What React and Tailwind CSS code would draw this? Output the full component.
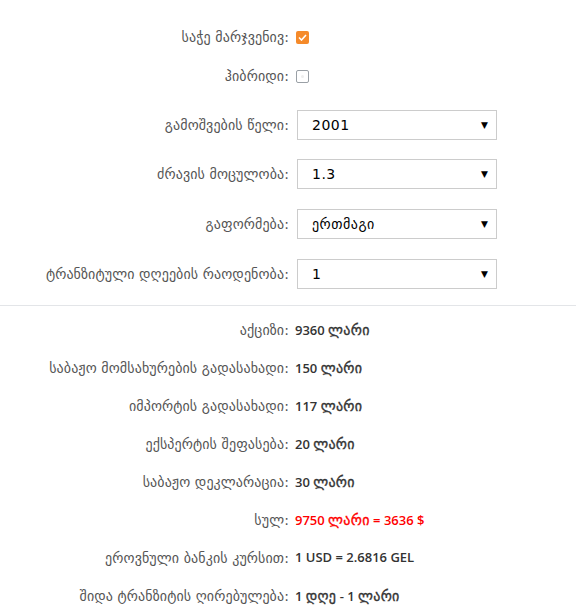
import React from 'react';

const font = { fontFamily: '"DejaVu Sans", sans-serif' };
const valueFont = { fontFamily: '"Open Sans", "DejaVu Sans", sans-serif' };

function Label({ children }) {
  return (
    <div className="w-[290px] shrink-0 text-right text-[14px] tracking-[0.1px] text-[#555] pr-[1px]">{children}</div>
  );
}

function Check({ checked }) {
  if (checked) {
    return (
      <div className="w-[13px] h-[13px] rounded-[2px] bg-[#f58a2a] flex items-center justify-center">
        <svg width="9" height="7" viewBox="0 0 9 7" fill="none">
          <path d="M1 3.5 L3.5 6 L8 1" stroke="#fff" strokeWidth="1.6" />
        </svg>
      </div>
    );
  }
  return (
    <div className="w-[13px] h-[13px] rounded-[2px] border border-[#9aa0a6] bg-white flex items-center justify-center">
      <div className="w-[3px] h-[3px] rounded-full bg-[#eee]" />
    </div>
  );
}

function Select({ value }) {
  return (
    <div className="w-[200px] h-[30px] border border-[#ccc] bg-white flex items-center justify-between pl-[14px] pr-[8px] text-[14px] text-black">
      <span className="tracking-[0.5px]">{value}</span>
      <span className="text-[9px] leading-none">▼</span>
    </div>
  );
}

// georgian runs in the values look lighter than the digits
function Value({ text, red }) {
  const parts = text.split(/([\u10A0-\u10FF]+)/);
  return (
    <span
      className={`text-[13px] font-semibold ${red ? 'text-[#ff0000]' : 'text-[#333]'}`}
      style={valueFont}
    >
      {parts.map((p, i) =>
        /[\u10A0-\u10FF]/.test(p) ? (
          <span key={i} className="font-normal text-[14px] tracking-[0.3px]" style={{ ...font, WebkitTextStroke: '0.35px currentColor' }}>
            {p}
          </span>
        ) : (
          <span key={i}>{p}</span>
        )
      )}
    </span>
  );
}

const results = [
  ['აქციზი:', '9360 ლარი'],
  ['საბაჟო მომსახურების გადასახადი:', '150 ლარი'],
  ['იმპორტის გადასახადი:', '117 ლარი'],
  ['ექსპერტის შეფასება:', '20 ლარი'],
  ['საბაჟო დეკლარაცია:', '30 ლარი'],
  ['სულ:', '9750 ლარი = 3636 $', true],
  ['ეროვნული ბანკის კურსით:', '1 USD = 2.6816 GEL'],
  ['შიდა ტრანზიტის ღირებულება:', '1 დღე - 1 ლარი'],
];

export default function App() {
  return (
    <div className="min-h-screen bg-white" style={font}>
      <div className="pt-[22px]">
        <div className="h-[30px] flex items-center gap-[6px]">
          <Label>საჭე მარჯვენივ:</Label>
          <Check checked />
        </div>
        <div className="h-[30px] mt-[9px] flex items-center gap-[6px]">
          <Label>ჰიბრიდი:</Label>
          <Check />
        </div>
        <div className="h-[30px] mt-[19px] flex items-center gap-[7px]">
          <Label>გამოშვების წელი:</Label>
          <Select value="2001" />
        </div>
        <div className="h-[30px] mt-[19px] flex items-center gap-[7px]">
          <Label>ძრავის მოცულობა:</Label>
          <Select value="1.3" />
        </div>
        <div className="h-[30px] mt-[20px] flex items-center gap-[7px]">
          <Label>გაფორმება:</Label>
          <Select value="ერთმაგი" />
        </div>
        <div className="h-[30px] mt-[20px] flex items-center gap-[7px]">
          <Label>ტრანზიტული დღეების რაოდენობა:</Label>
          <Select value="1" />
        </div>
      </div>
      <div className="mt-[16px] h-px bg-[#e3e5e8]" />
      <div className="pt-[5px]">
        {results.map(([label, value, red]) => (
          <div key={label} className="h-[38px] flex items-center gap-[5px]">
            <Label>{label}</Label>
            <Value text={value} red={red} />
          </div>
        ))}
      </div>
    </div>
  );
}
